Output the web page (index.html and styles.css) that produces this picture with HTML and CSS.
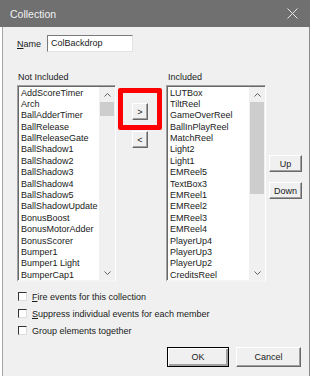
FILE: index.html
```html
<!DOCTYPE html>
<html lang="en">

<head>
  <meta charset="UTF-8">
  <meta name="viewport" content="width=device-width, initial-scale=1.0">
  <title>Collection</title>
  <link rel="stylesheet" href="styles.css">
</head>

<body>
  <div class="window">
    <div class="titlebar">
      <span class="title">Collection</span>
      <svg class="close" width="11" height="11" viewBox="0 0 11 11">
        <path d="M0.5 0.5 L10.5 10.5 M10.5 0.5 L0.5 10.5" stroke="#e6e6e6" stroke-width="1" fill="none" />
      </svg>
    </div>
    <div class="body">
      <div class="name-row">
        <span class="label"><u>N</u>ame</span>
        <div class="textbox">ColBackdrop</div>
      </div>
      <div class="captions">
        <span class="cap-left">Not Included</span>
        <span class="cap-right">Included</span>
      </div>
      <div class="lists">
        <div class="listbox list-left">
          <div class="items">
            <p>AddScoreTimer</p>
            <p>Arch</p>
            <p>BallAdderTimer</p>
            <p>BallRelease</p>
            <p>BallReleaseGate</p>
            <p>BallShadow1</p>
            <p>BallShadow2</p>
            <p>BallShadow3</p>
            <p>BallShadow4</p>
            <p>BallShadow5</p>
            <p>BallShadowUpdate</p>
            <p>BonusBoost</p>
            <p>BonusMotorAdder</p>
            <p>BonusScorer</p>
            <p>Bumper1</p>
            <p>Bumper1 Light</p>
            <p>BumperCap1</p>
          </div>
          <div class="scrollbar">
            <div class="arrow">
              <svg width="7" height="4" viewBox="0 0 7 4"><polyline points="0.5,3.5 3.5,0.5 6.5,3.5" stroke="#606060" fill="none" /></svg>
            </div>
            <div class="track">
              <div class="thumb thumb-small"></div>
            </div>
            <div class="arrow">
              <svg width="7" height="4" viewBox="0 0 7 4"><polyline points="0.5,0.5 3.5,3.5 6.5,0.5" stroke="#606060" fill="none" /></svg>
            </div>
          </div>
        </div>
        <div class="move-col">
          <div class="mark-wrap">
            <button class="btn small">&gt;</button>
            <div class="highlight"></div>
          </div>
          <button class="btn small">&lt;</button>
        </div>
        <div class="listbox list-right">
          <div class="items">
            <p>LUTBox</p>
            <p>TiltReel</p>
            <p>GameOverReel</p>
            <p>BallInPlayReel</p>
            <p>MatchReel</p>
            <p>Light2</p>
            <p>Light1</p>
            <p>EMReel5</p>
            <p>TextBox3</p>
            <p>EMReel1</p>
            <p>EMReel2</p>
            <p>EMReel3</p>
            <p>EMReel4</p>
            <p>PlayerUp4</p>
            <p>PlayerUp3</p>
            <p>PlayerUp2</p>
            <p>CreditsReel</p>
          </div>
          <div class="scrollbar">
            <div class="arrow">
              <svg width="7" height="4" viewBox="0 0 7 4"><polyline points="0.5,3.5 3.5,0.5 6.5,3.5" stroke="#606060" fill="none" /></svg>
            </div>
            <div class="track">
              <div class="thumb thumb-big"></div>
            </div>
            <div class="arrow">
              <svg width="7" height="4" viewBox="0 0 7 4"><polyline points="0.5,0.5 3.5,3.5 6.5,0.5" stroke="#606060" fill="none" /></svg>
            </div>
          </div>
        </div>
        <div class="order-col">
          <button class="btn order">Up</button>
          <button class="btn order">Down</button>
        </div>
      </div>
      <div class="checks">
        <div class="check"><span class="box"></span><span><u>F</u>ire events for this collection</span></div>
        <div class="check"><span class="box"></span><span><u>S</u>uppress individual events for each member</span></div>
        <div class="check"><span class="box"></span><span>Group elements together</span></div>
      </div>
      <div class="actions">
        <button class="btn action default">OK</button>
        <button class="btn action">Cancel</button>
      </div>
    </div>
  </div>
</body>

</html>
```

FILE: styles.css
```css
* {
  box-sizing: border-box;
  padding: 0;
  margin: 0;
}

html,
body {
  width: 100%;
  height: 100%;
  background-color: #fff;
}

body {
  font-family: "Liberation Sans", Arial, sans-serif;
  font-size: 9px;
  color: #1a1a1a;
}

u {
  text-decoration: underline;
}

.window {
  width: 310px;
}

.titlebar {
  height: 27px;
  background-color: #707070;
  display: flex;
  align-items: center;
  justify-content: space-between;
  padding: 0 12px 0 10px;
}

.titlebar .title {
  color: #f2f2f2;
  font-size: 10.5px;
}

.body {
  margin-left: 2px;
  height: 349px;
  background-color: #f0f0f0;
  border-left: 1px solid #a6a6a6;
  border-right: 1px solid #8a8a8a;
  padding: 8px 7px 0 14px;
}

.name-row {
  display: flex;
  align-items: center;
  height: 17px;
}

.name-row .label {
  width: 30px;
}

.textbox {
  width: 86px;
  height: 17px;
  background-color: #fff;
  border-top: 1px solid #7a7a7a;
  border-left: 1px solid #7a7a7a;
  border-right: 1px solid #e3e3e3;
  border-bottom: 1px solid #e3e3e3;
  padding: 2px 0 0 3px;
  line-height: 11px;
}

.captions {
  display: flex;
  margin-top: 20px;
  height: 11px;
  line-height: 11px;
}

.cap-left {
  width: 151px;
  padding-left: 1px;
}

.lists {
  display: flex;
  margin-top: 2px;
  height: 197px;
}

.listbox {
  display: flex;
  background-color: #fff;
  border-top: 1px solid #a0a0a0;
  border-left: 1px solid #a0a0a0;
  border-right: 1px solid #fff;
  border-bottom: 2px solid #f4f4f4;
  box-shadow: inset 1px 1px 0 #696969;
  overflow: hidden;
}

.list-left {
  width: 99px;
}

.list-right {
  width: 100px;
}

.items {
  flex: 1;
  overflow: hidden;
  padding: 1.5px 0 0 3px;
}

.items p {
  line-height: 11.4px;
  height: 11.4px;
  white-space: nowrap;
}

.scrollbar {
  width: 16px;
  display: flex;
  flex-direction: column;
  background-color: #f0f0f0;
  margin: 1px 0 0 0;
}

.scrollbar .arrow {
  height: 15px;
  display: flex;
  align-items: center;
  justify-content: center;
}

.scrollbar .track {
  flex: 1;
  padding: 0 1px;
}

.thumb {
  background-color: #cdcdcd;
}

.thumb-small {
  height: 14px;
}

.thumb-big {
  height: 92px;
}

.btn {
  font-family: "Liberation Sans", Arial, sans-serif;
  font-size: 9px;
  color: #1a1a1a;
  background-color: #f0f0f0;
  border-top: 1px solid #fff;
  border-left: 1px solid #fff;
  border-right: 1px solid #696969;
  border-bottom: 1px solid #696969;
  box-shadow: inset -1px -1px 0 #a0a0a0;
}

.move-col {
  width: 50px;
  display: flex;
  flex-direction: column;
  align-items: flex-start;
  padding: 18px 0 0 16px;
}

.mark-wrap {
  position: relative;
}

.btn.small {
  width: 16px;
  height: 17px;
  line-height: 14px;
}

.move-col > .btn.small {
  margin-top: 11px;
}

.highlight {
  position: absolute;
  left: -14px;
  top: -15px;
  width: 44px;
  height: 42px;
  border: 5px solid #ff0000;
  border-radius: 2px;
}

.order-col {
  display: flex;
  flex-direction: column;
  padding: 70px 0 0 3px;
}

.btn.order {
  width: 33px;
  height: 17px;
  margin-bottom: 10px;
}

.checks {
  margin-top: 6px;
  padding-left: 1px;
}

.check {
  display: flex;
  align-items: center;
  height: 17px;
}

.check .box {
  width: 9px;
  height: 9px;
  background-color: #fff;
  border-top: 1px solid #333;
  border-left: 1px solid #333;
  border-right: 1px solid #dcdcdc;
  border-bottom: 1px solid #dcdcdc;
  margin-right: 5px;
}

.actions {
  display: flex;
  justify-content: flex-end;
  gap: 7px;
  margin-top: 8px;
  padding-right: 1px;
}

.btn.action {
  height: 20px;
}

.btn.default {
  width: 62px;
  border: 1px solid #000;
  box-shadow: inset 1px 1px 0 #fff, inset -2px -2px 0 #a0a0a0, inset -1px -1px 0 #696969;
}

.btn.action:not(.default) {
  width: 65px;
}
```
